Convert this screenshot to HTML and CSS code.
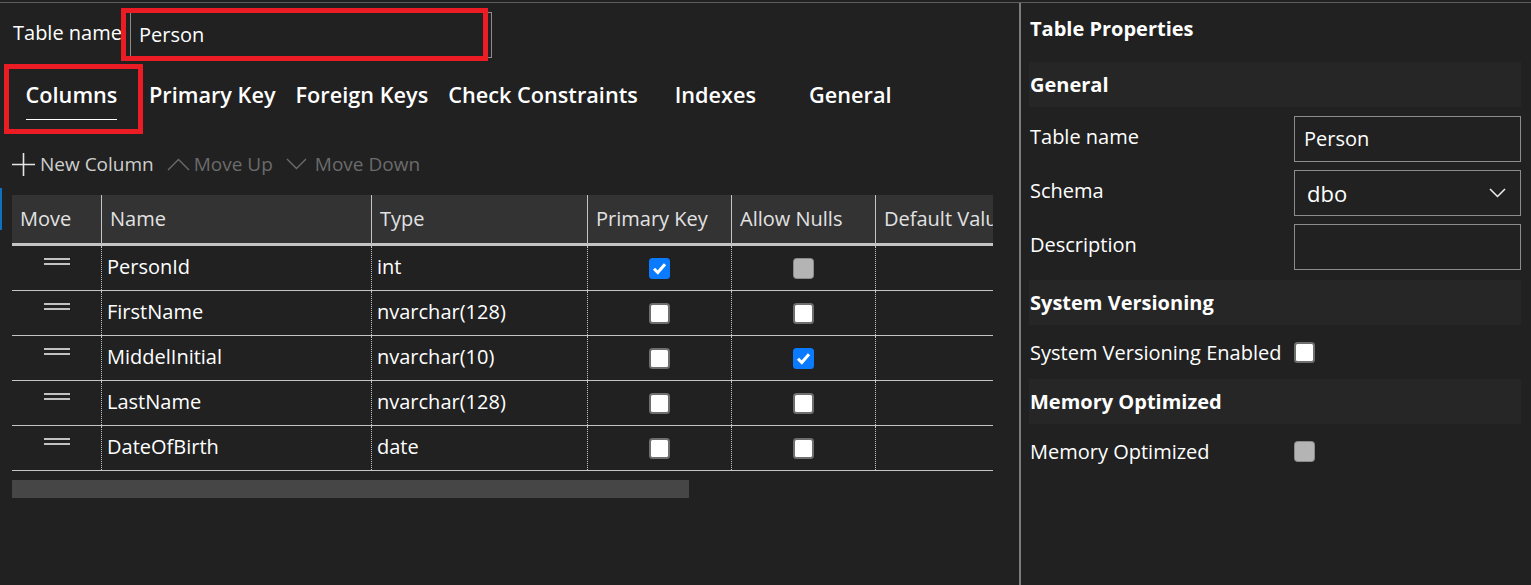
FILE: index.html
```html
<!DOCTYPE html>
<html lang="en">
<head>
<meta charset="utf-8">
<title>Table Designer</title>
<link rel="stylesheet" href="styles.css">
</head>
<body>
<div class="app">
  <main class="designer">
    <div class="name-row">
      <span class="name-label">Table name</span>
      <div class="name-field">
        <div class="text-input">Person</div>
        <div class="annot annot-name"></div>
      </div>
    </div>

    <nav class="tabs">
      <div class="tab active"><span class="tab-label">Columns</span><div class="annot annot-tab"></div></div>
      <div class="tab"><span class="tab-label">Primary Key</span></div>
      <div class="tab"><span class="tab-label">Foreign Keys</span></div>
      <div class="tab"><span class="tab-label">Check Constraints</span></div>
      <div class="tab"><span class="tab-label">Indexes</span></div>
      <div class="tab"><span class="tab-label">General</span></div>
    </nav>

    <div class="toolbar">
      <div class="tool">
        <svg class="ico-plus" width="23" height="23" viewBox="0 0 23 23"><path d="M11.5 0V23M0 11.5H23" stroke="#e6e6e6" stroke-width="1.6" fill="none"/></svg>
        <span>New Column</span>
      </div>
      <div class="tool disabled">
        <svg width="23" height="13" viewBox="0 0 23 13"><polyline points="1,12 11.5,1.5 22,12" stroke="#6b6b6b" stroke-width="1.4" fill="none"/></svg>
        <span>Move Up</span>
      </div>
      <div class="tool disabled">
        <svg class="ico-down" width="21" height="12" viewBox="0 0 21 12"><polyline points="1,1 10.5,10.5 20,1" stroke="#6b6b6b" stroke-width="1.4" fill="none"/></svg>
        <span>Move Down</span>
      </div>
    </div>

    <div class="grid-area">
      <div class="focus-bar"></div>
      <div class="grid-wrap">
        <div class="grid-row grid-head">
          <div class="hcell first">Move</div>
          <div class="hcell">Name</div>
          <div class="hcell">Type</div>
          <div class="hcell">Primary Key</div>
          <div class="hcell">Allow Nulls</div>
          <div class="hcell">Default Value</div>
          <div class="hcell"></div>
        </div>

        <div class="grid-row">
          <div class="cell move"><span class="handle"></span></div>
          <div class="cell">PersonId</div>
          <div class="cell">int</div>
          <div class="cell check"><span class="cb cb-on"><svg width="21" height="21" viewBox="0 0 21 21"><path d="M5 10.8L8.8 14.5L16 6.2" stroke="#fff" stroke-width="3" fill="none"/></svg></span></div>
          <div class="cell check"><span class="cb cb-dis"></span></div>
          <div class="cell"></div>
          <div class="cell"></div>
        </div>

        <div class="grid-row">
          <div class="cell move"><span class="handle"></span></div>
          <div class="cell">FirstName</div>
          <div class="cell">nvarchar(128)</div>
          <div class="cell check"><span class="cb cb-off"></span></div>
          <div class="cell check"><span class="cb cb-off"></span></div>
          <div class="cell"></div>
          <div class="cell"></div>
        </div>

        <div class="grid-row">
          <div class="cell move"><span class="handle"></span></div>
          <div class="cell">MiddelInitial</div>
          <div class="cell">nvarchar(10)</div>
          <div class="cell check"><span class="cb cb-off"></span></div>
          <div class="cell check"><span class="cb cb-on"><svg width="21" height="21" viewBox="0 0 21 21"><path d="M5 10.8L8.8 14.5L16 6.2" stroke="#fff" stroke-width="3" fill="none"/></svg></span></div>
          <div class="cell"></div>
          <div class="cell"></div>
        </div>

        <div class="grid-row">
          <div class="cell move"><span class="handle"></span></div>
          <div class="cell">LastName</div>
          <div class="cell">nvarchar(128)</div>
          <div class="cell check"><span class="cb cb-off"></span></div>
          <div class="cell check"><span class="cb cb-off"></span></div>
          <div class="cell"></div>
          <div class="cell"></div>
        </div>

        <div class="grid-row">
          <div class="cell move"><span class="handle"></span></div>
          <div class="cell">DateOfBirth</div>
          <div class="cell">date</div>
          <div class="cell check"><span class="cb cb-off"></span></div>
          <div class="cell check"><span class="cb cb-off"></span></div>
          <div class="cell"></div>
          <div class="cell"></div>
        </div>

        <div class="hscroll"></div>
      </div>
    </div>
  </main>

  <aside class="props">
    <div class="props-title">Table Properties</div>
    <div class="section">General</div>
    <div class="prop-list">
      <div class="prop">
        <span class="prop-label">Table name</span>
        <div class="prop-input">Person</div>
      </div>
      <div class="prop">
        <span class="prop-label">Schema</span>
        <div class="prop-input select"><span>dbo</span>
          <svg width="17" height="10" viewBox="0 0 17 10"><polyline points="1,1 8.5,8.5 16,1" stroke="#f0f0f0" stroke-width="1.5" fill="none"/></svg>
        </div>
      </div>
      <div class="prop">
        <span class="prop-label">Description</span>
        <div class="prop-input"></div>
      </div>
    </div>
    <div class="section">System Versioning</div>
    <div class="check-row">
      <span class="prop-label">System Versioning Enabled</span>
      <span class="cb cb-off"></span>
    </div>
    <div class="section">Memory Optimized</div>
    <div class="check-row">
      <span class="prop-label">Memory Optimized</span>
      <span class="cb cb-dis"></span>
    </div>
  </aside>
</div>
</body>
</html>
```

FILE: styles.css
```css
* { box-sizing: border-box; }

html, body {
  margin: 0;
  padding: 0;
}

body {
  background: #212121;
  color: #ffffff;
  font-family: "Open Sans", "Noto Sans", sans-serif;
  font-size: 20px;
  width: 1531px;
  height: 585px;
  overflow: hidden;
}

.app {
  margin-top: 2px;
  border-top: 1px solid #5e5e5e;
  display: flex;
  height: 583px;
}

.designer {
  width: 1019px;
  flex: none;
}

.props {
  flex: 1;
  border-left: 2px solid #7c7c7c;
  padding: 0 10px 0 8px;
}

/* ---------- table name ---------- */
.name-row {
  display: flex;
  align-items: center;
  margin-top: 9px;
  padding-left: 13px;
  height: 46px;
}

.name-label {
  width: 117px;
  line-height: 28px;
  padding-bottom: 5px;
}

.name-field {
  position: relative;
}

.text-input {
  width: 362px;
  height: 46px;
  border: 1px solid #8c8c8c;
  padding-left: 8px;
  display: flex;
  align-items: center;
  line-height: 28px;
}

.annot {
  position: absolute;
  border: 5px solid #ec1c24;
  pointer-events: none;
}

.annot-name {
  left: -9px;
  top: -4px;
  width: 367px;
  height: 53px;
}

/* ---------- tabs ---------- */
.tabs {
  display: flex;
  margin-top: 6px;
  padding-left: 4px;
  height: 70px;
}

.tab {
  position: relative;
  min-width: 135px;
  padding: 16px 10px 0;
  text-align: center;
  font-weight: 600;
  font-size: 21.7px;
  white-space: nowrap;
}

.tab-label {
  display: inline-block;
  line-height: 28px;
}

.tab.active .tab-label {
  padding-bottom: 10px;
  border-bottom: 1px solid #ffffff;
}

.annot-tab {
  left: 0;
  top: 0;
  width: 139px;
  height: 70px;
}

/* ---------- toolbar ---------- */
.toolbar {
  display: flex;
  align-items: center;
  gap: 13px;
  margin-top: 15px;
  padding-left: 12px;
  height: 30px;
  font-size: 19px;
}

.tool {
  display: flex;
  align-items: center;
  gap: 5px;
  line-height: 28px;
  color: #cfcfcf;
}

.tool.disabled {
  color: #6b6b6b;
  gap: 4px;
}

.ico-down {
  margin-right: 4px;
}

/* ---------- grid ---------- */
.grid-area {
  display: flex;
  margin-top: 16px;
}

.focus-bar {
  flex: none;
  width: 2px;
  height: 42px;
  margin-top: -7px;
  margin-right: 10px;
  background: #0e70c0;
}

.grid-wrap {
  width: 981px;
  overflow: hidden;
}

.grid-row {
  display: grid;
  grid-template-columns: 89px 270px 216px 144px 144px 170px 170px;
  width: 1203px;
  height: 45px;
  border-bottom: 1px solid #c4c4c4;
}

.grid-head {
  height: 51px;
  background: #333333;
  border-bottom: 3px solid #c4c4c4;
}

.hcell {
  display: flex;
  align-items: center;
  padding: 0 0 1px 8px;
  border-left: 1px solid #c4c4c4;
  color: #e2e2e2;
  white-space: nowrap;
  overflow: hidden;
}

.hcell.first {
  border-left: none;
}

.cell {
  display: flex;
  align-items: center;
  padding: 0 0 4px 5px;
  border-left: 1px dotted #c4c4c4;
  white-space: nowrap;
}

.cell.move {
  border-left: none;
  justify-content: center;
  align-items: flex-start;
  padding: 12px 0 0;
}

.cell.check {
  justify-content: center;
  padding: 0;
}

.handle {
  display: block;
  width: 26px;
  height: 7px;
  border-top: 2px solid #c2c2c2;
  border-bottom: 2px solid #c2c2c2;
}

.hscroll {
  margin-top: 9px;
  width: 677px;
  height: 18px;
  background: #464646;
}

/* ---------- checkboxes ---------- */
.cb {
  display: block;
  flex: none;
  width: 21px;
  height: 21px;
  border-radius: 3.5px;
}

.cb svg {
  display: block;
}

.cb-off {
  background: #ffffff;
  border: 2px solid #6e6e6e;
}

.cb-on {
  background: #0a7bff;
}

.cb-dis {
  background: #b4b4b4;
  border: 1.5px solid #8a8a8a;
}

/* ---------- properties ---------- */
.props-title {
  margin: 12px 0 19px;
  padding-left: 1px;
  font-weight: 700;
  line-height: 28px;
}

.section {
  height: 45px;
  background: #262626;
  display: flex;
  align-items: center;
  padding: 0 0 1px 1px;
  font-weight: 700;
}

.prop-list {
  display: flex;
  flex-direction: column;
  gap: 8px;
  padding: 9px 0 10px;
}

.prop {
  display: grid;
  grid-template-columns: 265px 227px;
  align-items: center;
  height: 46px;
}

.prop-label {
  padding-left: 1px;
  padding-bottom: 4px;
  line-height: 28px;
  white-space: nowrap;
}

.prop-input {
  height: 46px;
  border: 1px solid #8c8c8c;
  padding-left: 9px;
  display: flex;
  align-items: center;
  line-height: 28px;
}

.prop-input.select {
  padding-left: 12px;
  padding-right: 14px;
  justify-content: space-between;
  font-size: 22px;
}

.check-row {
  display: grid;
  grid-template-columns: 265px auto;
  align-items: center;
  height: 54px;
  padding-top: 6px;
}

.check-row .cb {
  margin-bottom: 5px;
}
```
